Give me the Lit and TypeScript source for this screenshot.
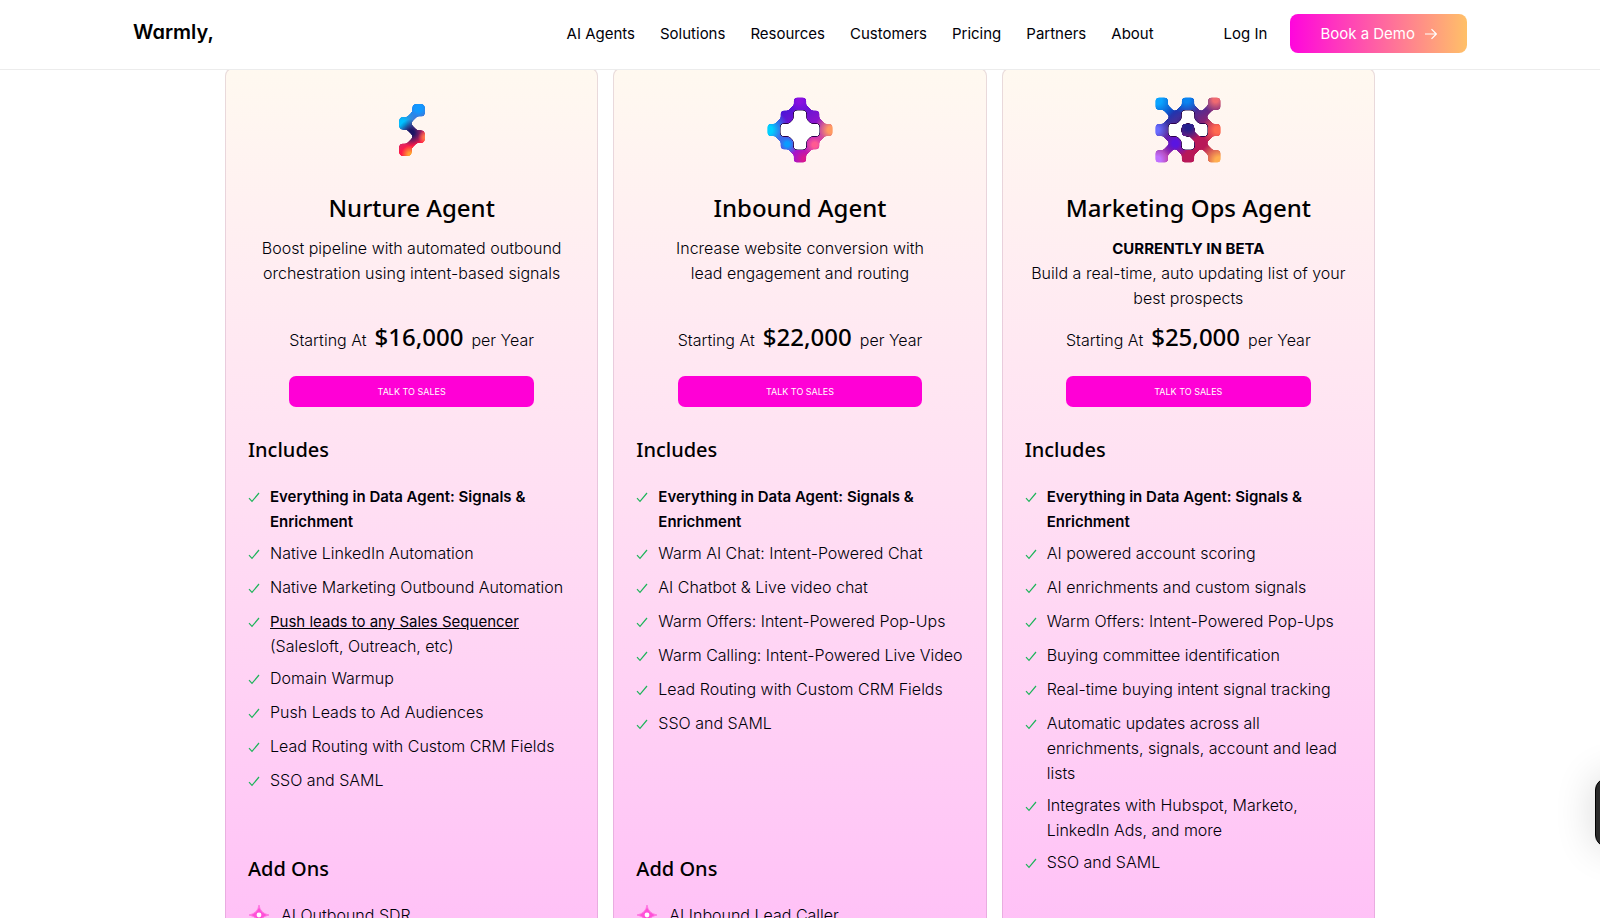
import { LitElement, html, svg, css, nothing, TemplateResult } from "lit";
import { customElement, property } from "lit/decorators.js";

type IconKind = "nurture" | "inbound" | "ops";
type Cell = [number, number];

interface Glow {
  x: number;
  y: number;
  r: number;
  color: string;
}

interface IconSpec {
  cells: Cell[];
  links: [Cell, Cell][];
  voids: Cell[];
  voidLinks: [Cell, Cell][];
  core: Cell[];
  base: [string, string];
  glows: Glow[];
}

const diagonals = (cells: Cell[]): [Cell, Cell][] => {
  const out: [Cell, Cell][] = [];
  cells.forEach((a, i) =>
    cells.slice(i + 1).forEach((b) => {
      if (Math.abs(a[0] - b[0]) === 1 && Math.abs(a[1] - b[1]) === 1) out.push([a, b]);
    })
  );
  return out;
};

const nurtureCells: Cell[] = [[2.5, 0.5], [1.5, 1.5], [2.5, 2.5], [1.5, 3.5]];
const inboundCells: Cell[] = [[2, 0], [3, 1], [4, 2], [3, 3], [2, 4], [1, 3], [0, 2], [1, 1]];
const opsCells: Cell[] = [
  [0, 0], [2, 0], [4, 0], [1, 1], [3, 1], [0, 2], [4, 2], [1, 3], [3, 3], [0, 4], [2, 4], [4, 4],
];
const plus: Cell[] = [[2, 1], [1, 2], [3, 2], [2, 3]];

const ICONS: Record<IconKind, IconSpec> = {
  nurture: {
    cells: nurtureCells,
    links: diagonals(nurtureCells),
    voids: [],
    voidLinks: [],
    core: [],
    base: ["#1573f0", "#ff1848"],
    glows: [
      { x: 118, y: 34, r: 52, color: "#1298ff" },
      { x: 70, y: 78, r: 44, color: "#00c0ff" },
      { x: 96, y: 106, r: 40, color: "#1b1464" },
      { x: 138, y: 120, r: 22, color: "#ff7a4a" },
      { x: 92, y: 170, r: 26, color: "#ffa030" },
    ],
  },
  inbound: {
    cells: inboundCells,
    links: diagonals(inboundCells),
    voids: [...plus, [2, 2]],
    voidLinks: diagonals(plus),
    core: [],
    base: ["#4a14d8", "#a814c8"],
    glows: [
      { x: 4, y: 98, r: 62, color: "#00d0ff" },
      { x: 60, y: 140, r: 34, color: "#0a9cff" },
      { x: 98, y: 10, r: 40, color: "#8a10e0" },
      { x: 190, y: 98, r: 50, color: "#ff9a62" },
      { x: 142, y: 142, r: 36, color: "#ff5a92" },
      { x: 112, y: 184, r: 32, color: "#d81890" },
    ],
  },
  ops: {
    cells: opsCells,
    links: diagonals(opsCells),
    voids: plus,
    voidLinks: [[[2, 1], [1, 2]], [[2, 1], [3, 2]], [[1, 2], [2, 3]]],
    core: [[2, 2], [3, 3]],
    base: ["#1038b8", "#b81858"],
    glows: [
      { x: 8, y: 10, r: 60, color: "#0aa4ff" },
      { x: 94, y: 8, r: 44, color: "#0a84f0" },
      { x: 180, y: 8, r: 40, color: "#f06a70" },
      { x: 186, y: 98, r: 48, color: "#ff6a50" },
      { x: 4, y: 98, r: 40, color: "#6a6cff" },
      { x: 6, y: 188, r: 58, color: "#c070ff" },
      { x: 60, y: 138, r: 44, color: "#5a14e0" },
      { x: 98, y: 88, r: 42, color: "#24208c" },
      { x: 190, y: 190, r: 60, color: "#ffae50" },
    ],
  },
};

const PITCH = 39;
const at = (n: number) => 20 + n * PITCH;

@customElement("agent-icon")
export class AgentIcon extends LitElement {
  static styles = css`
    :host {
      display: block;
      width: 66px;
      height: 66px;
    }
    svg {
      display: block;
      width: 100%;
      height: 100%;
    }
  `;

  @property() kind: IconKind = "nurture";

  private shapes(cells: Cell[], links: [Cell, Cell][], size: number, width: number) {
    return svg`
      ${cells.map(
        ([x, y]) =>
          svg`<rect x=${at(x) - size / 2} y=${at(y) - size / 2} width=${size} height=${size} rx="8" stroke="none" />`
      )}
      ${links.map(
        ([a, b]) =>
          svg`<line x1=${at(a[0])} y1=${at(a[1])} x2=${at(b[0])} y2=${at(b[1])} stroke-width=${width} />`
      )}`;
  }

  private mask(id: string, cells: Cell[], links: [Cell, Cell][]) {
    return svg`
      <mask id=${id} maskUnits="userSpaceOnUse" x="0" y="0" width="196" height="196">
        <g filter="url(#goo)" fill="#fff" stroke="#fff">${this.shapes(cells, links, 36, 20)}</g>
      </mask>`;
  }

  private paint(mask: string, glows: Glow[]) {
    return svg`
      <g mask=${`url(#${mask})`}>
        <rect width="196" height="196" fill="url(#base)" />
        ${glows.map((_, i) => svg`<rect width="196" height="196" fill=${`url(#g${i})`} />`)}
      </g>`;
  }

  render() {
    const spec = ICONS[this.kind];
    return html`
      <svg viewBox="0 0 196 196" aria-hidden="true">
        <defs>
          <filter id="goo" filterUnits="userSpaceOnUse" x="-10" y="-10" width="216" height="216">
            <feGaussianBlur stdDeviation="3" />
            <feColorMatrix values="1 0 0 0 0  0 1 0 0 0  0 0 1 0 0  0 0 0 6 -2" />
          </filter>
          <linearGradient id="base" x1="0" y1="0" x2="0.6" y2="1">
            <stop offset="0.25" stop-color=${spec.base[0]} />
            <stop offset="0.75" stop-color=${spec.base[1]} />
          </linearGradient>
          ${spec.glows.map(
            (g, i) => svg`
            <radialGradient id=${"g" + i} gradientUnits="userSpaceOnUse" cx=${g.x} cy=${g.y} r=${g.r}>
              <stop offset="0.2" stop-color=${g.color} />
              <stop offset="1" stop-color=${g.color} stop-opacity="0" />
            </radialGradient>`
          )}
          ${this.mask("body", spec.cells, spec.links)}
          ${this.mask("core", spec.core, diagonals(spec.core))}
        </defs>
        ${this.paint("body", spec.glows)}
        <g filter="url(#goo)" fill="#2a0c4c" stroke="#2a0c4c">
          ${this.shapes(spec.voids, spec.voidLinks, 39, 18)}
        </g>
        <g filter="url(#goo)" fill="#fff" stroke="#fff">
          ${this.shapes(spec.voids, spec.voidLinks, 36, 15)}
        </g>
        ${spec.core.length ? this.paint("core", spec.glows) : nothing}
      </svg>
    `;
  }
}

interface Agent {
  icon: IconKind;
  name: string;
  blurb: TemplateResult;
  price: string;
  includes: (string | TemplateResult)[];
  addOns: string[];
}

const everything = html`<strong class="semi">Everything in Data Agent: Signals &amp; Enrichment</strong>`;

const AGENTS: Agent[] = [
  {
    icon: "nurture",
    name: "Nurture Agent",
    blurb: html`Boost pipeline with automated outbound orchestration using intent-based signals`,
    price: "$16,000",
    includes: [
      everything,
      "Native LinkedIn Automation",
      "Native Marketing Outbound Automation",
      html`<a class="link" href="#sequencer">Push leads to any Sales Sequencer</a> (Salesloft, Outreach, etc)`,
      "Domain Warmup",
      "Push Leads to Ad Audiences",
      "Lead Routing with Custom CRM Fields",
      "SSO and SAML",
    ],
    addOns: ["AI Outbound SDR"],
  },
  {
    icon: "inbound",
    name: "Inbound Agent",
    blurb: html`Increase website conversion with<br />lead engagement and routing`,
    price: "$22,000",
    includes: [
      everything,
      "Warm AI Chat: Intent-Powered Chat",
      "AI Chatbot & Live video chat",
      "Warm Offers: Intent-Powered Pop-Ups",
      "Warm Calling: Intent-Powered Live Video",
      "Lead Routing with Custom CRM Fields",
      "SSO and SAML",
    ],
    addOns: ["AI Inbound Lead Caller"],
  },
  {
    icon: "ops",
    name: "Marketing Ops Agent",
    blurb: html`<strong class="beta">CURRENTLY IN BETA</strong><br />Build a real-time, auto updating list of your best prospects`,
    price: "$25,000",
    includes: [
      everything,
      "AI powered account scoring",
      "AI enrichments and custom signals",
      "Warm Offers: Intent-Powered Pop-Ups",
      "Buying committee identification",
      "Real-time buying intent signal tracking",
      "Automatic updates across all enrichments, signals, account and lead lists",
      "Integrates with Hubspot, Marketo, LinkedIn Ads, and more",
      "SSO and SAML",
    ],
    addOns: [],
  },
];

const NAV = ["AI Agents", "Solutions", "Resources", "Customers", "Pricing", "Partners", "About"];

const check = html`<svg class="check" viewBox="0 0 12 12" aria-hidden="true">
  <path d="M1 7.2 4 10.4 11 2" fill="none" stroke="#1db45a" stroke-width="1.2" />
</svg>`;

const sparkle = html`<svg class="sparkle" viewBox="0 0 20 20" aria-hidden="true">
  <path d="M10 0Q11.2 8.4 20 10 11.2 11.6 10 20 8.8 11.6 0 10 8.8 8.4 10 0Z" fill="#ff4fd8" stroke="#ff7be2" />
  <circle cx="10" cy="10" r="2.4" fill="#fff" />
</svg>`;

@customElement("app-root")
export class AppRoot extends LitElement {
  static styles = css`
    :host {
      display: block;
      height: 100vh;
      overflow: hidden;
      position: relative;
      background: #fff;
      color: #000008;
      font: 300 16px/25px Inter, "Liberation Sans", sans-serif;
    }
    * {
      box-sizing: border-box;
    }
    a {
      color: inherit;
      text-decoration: none;
    }
    .header {
      position: relative;
      z-index: 1;
      background: #fff;
      border-bottom: 1px solid #ececec;
      font-size: 15px;
      font-weight: 400;
    }
    .bar {
      max-width: 1334px;
      height: 69px;
      margin: 0 auto;
      padding-bottom: 2px;
      display: flex;
      align-items: center;
      justify-content: flex-end;
      gap: 23px;
    }
    .logo {
      margin-right: auto;
      padding-bottom: 2px;
      font-size: 20px;
      font-weight: 600;
      font-feature-settings: "cv11";
      color: #000;
    }
    .nav {
      display: flex;
      gap: 25px;
      margin-right: 47px;
    }
    .demo {
      display: flex;
      align-items: center;
      gap: 10px;
      height: 39px;
      padding: 0 30px;
      border: 0;
      border-radius: 8px;
      font: inherit;
      color: #fff;
      background: linear-gradient(90deg, #ff05dd, #ffc068);
    }
    .arrow {
      width: 12px;
      height: 12px;
    }
    .plans {
      max-width: 1150px;
      margin: -2px auto 0;
      display: grid;
      grid-template-columns: repeat(3, 1fr);
      gap: 15px;
    }
    .card {
      display: flex;
      flex-direction: column;
      min-height: 1020px;
      padding: 28px 22px;
      border: 1px solid rgba(120, 60, 110, 0.16);
      border-radius: 8px;
      background: linear-gradient(180deg, #fff9f0 0, #ffdff3 42%, #ffbdf7 90%);
    }
    .icon {
      align-self: center;
    }
    .title,
    .subtitle,
    .amount {
      font-family: "Noto Sans", "Open Sans", sans-serif;
      font-weight: 500;
      color: #000;
    }
    .title {
      margin: 26px 0 9px;
      font-size: 24px;
      line-height: 38px;
      text-align: center;
    }
    .blurb {
      min-height: 75px;
      margin: 0;
      text-align: center;
    }
    .offer {
      align-self: center;
      display: grid;
      gap: 20px;
      margin-top: 7px;
    }
    .price {
      display: flex;
      align-items: baseline;
      gap: 8px;
      margin: 0;
    }
    .amount {
      font-size: 24px;
      line-height: 38px;
    }
    .sales {
      height: 31px;
      border: 0;
      border-radius: 7px;
      background: #ff00d6;
      color: #fff;
      font: 400 9px/16px Inter, sans-serif;
    }
    .subtitle {
      margin: 26px 0 17px;
      font-size: 20px;
      line-height: 34px;
    }
    .list {
      display: flex;
      flex-direction: column;
      gap: 7px;
      margin: 0;
      padding: 0;
      list-style: none;
    }
    .includes {
      min-height: 342px;
    }
    .item {
      display: flex;
      gap: 10px;
      min-height: 27px;
    }
    .semi {
      font-size: 15px;
      font-weight: 600;
    }
    .beta {
      font-size: 15px;
      font-weight: 700;
    }
    .link {
      font-size: 15px;
      font-weight: 400;
      text-decoration: underline;
    }
    .check {
      flex: none;
      width: 12px;
      height: 12px;
      margin-top: 7px;
    }
    .sparkle {
      flex: none;
      width: 20px;
      height: 20px;
      margin: 2px 2px 0 1px;
    }
    .chat {
      position: absolute;
      right: -60px;
      bottom: 71px;
      width: 65px;
      height: 69px;
      border: 1px solid #000;
      border-radius: 12px;
      background: #2b2b2b;
      box-shadow: 0 0 40px rgba(0, 0, 0, 0.16);
    }
  `;

  private card(a: Agent) {
    return html`
      <article class="card">
        <agent-icon class="icon" kind=${a.icon}></agent-icon>
        <h2 class="title">${a.name}</h2>
        <p class="blurb">${a.blurb}</p>
        <div class="offer">
          <p class="price">
            <span>Starting At</span><span class="amount">${a.price}</span><span>per Year</span>
          </p>
          <button class="sales" type="button">TALK TO SALES</button>
        </div>
        <h3 class="subtitle">Includes</h3>
        <ul class="list includes">
          ${a.includes.map((t) => html`<li class="item">${check}<span>${t}</span></li>`)}
        </ul>
        ${a.addOns.length
          ? html`<h3 class="subtitle">Add Ons</h3>
              <ul class="list">
                ${a.addOns.map((t) => html`<li class="item">${sparkle}<span>${t}</span></li>`)}
              </ul>`
          : nothing}
      </article>
    `;
  }

  render() {
    return html`
      <header class="header">
        <div class="bar">
          <a class="logo" href="#home">Warmly,</a>
          <nav class="nav">${NAV.map((n) => html`<a href="#nav">${n}</a>`)}</nav>
          <a href="#login">Log In</a>
          <button class="demo" type="button">
            Book a Demo
            <svg class="arrow" viewBox="0 0 12 12" aria-hidden="true">
              <path d="M0 6H11M6.5 1.2 11.3 6 6.5 10.8" fill="none" stroke="#fff" stroke-width="1.2" />
            </svg>
          </button>
        </div>
      </header>
      <main class="plans">${AGENTS.map((a) => this.card(a))}</main>
      <button class="chat" type="button" aria-label="Open chat"></button>
    `;
  }
}
